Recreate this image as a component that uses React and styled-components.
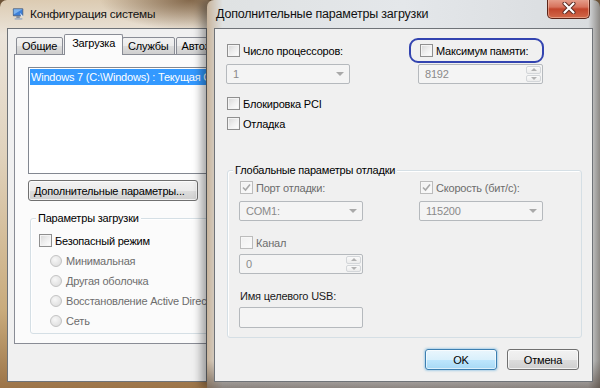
import React from "react";
import styled, { createGlobalStyle, css } from "styled-components";

const GlobalStyle = createGlobalStyle`
  html, body { margin: 0; padding: 0; }
  body {
    font-family: "Liberation Sans", Arial, sans-serif;
    font-size: 11px;
    letter-spacing: -0.2px;
    color: #000;
  }
  * { box-sizing: border-box; }
`;

const Desktop = styled.div`
  position: relative;
  width: 600px;
  height: 388px;
  overflow: hidden;
  background: #6e5438;
`;

// windows on the desktop
const Window = styled.div`
  position: absolute;
  top: 0;
  left: ${(p) => p.$left}px;
  width: ${(p) => p.$width}px;
  height: 388px;
  z-index: ${(p) => (p.$front ? 2 : 1)};
  display: flex;
  flex-direction: column;
  padding: 0 7px 6px 7px;
  border-radius: 7px 7px 0 0;
  overflow: hidden;
  ${(p) =>
    p.$front
      ? css`
          overflow: visible;
          background:
            linear-gradient(to bottom, rgba(255,255,255,0) 93%, rgba(70,55,45,0.55) 100%),
            linear-gradient(to right, #c8b49c 0%, #dfe2e3 4%, #e4e7ea 50%, #d9dcdf 97%, #8d8a86 100%);
          box-shadow: -6px 0 8px rgba(0, 0, 0, 0.35);
        `
      : css`
          background:
            radial-gradient(ellipse 90px 30px at 190px 0px, rgba(110,80,50,0.8), rgba(110,80,50,0) 100%),
            linear-gradient(to bottom, #dccbb2 0%, #ebe4da 9%, #e0d2bc 40%, #c9ab7c 80%, #9c7448 100%);
        `}
`;

const TitleBar = styled.div`
  height: 28px;
  flex: none;
  display: flex;
  align-items: center;
  gap: 5px;
  padding-left: ${(p) => (p.$icon ? 5 : 2)}px;
  font-size: ${(p) => (p.$icon ? 11.8 : 12.5)}px;
  color: #111;
`;

const Client = styled.div`
  flex: 1;
  background: #f0f0f0;
  border: 1px solid #6f7378;
  position: relative;
  overflow: hidden;
`;

const CloseButton = styled.div`
  position: absolute;
  right: 10px;
  top: -2px;
  width: 43px;
  height: 21px;
  border: 1px solid #5a2418;
  border-top: none;
  border-radius: 0 0 5px 5px;
  background: linear-gradient(to bottom, #e9a896 0%, #d7735d 45%, #c2452c 55%, #d1694a 100%);
  box-shadow: inset 0 0 0 1px rgba(255, 220, 200, 0.45);
  display: flex;
  align-items: center;
  justify-content: center;
`;

/* ---------- common controls ---------- */

const CheckRow = styled.label`
  display: flex;
  align-items: center;
  gap: 3px;
  height: 13px;
  margin-left: ${(p) => p.$indent || 0}px;
  color: ${(p) => (p.$disabled ? "#6d6d6d" : "#000")};
  white-space: nowrap;
`;

const Box = styled.span`
  width: 13px;
  height: 13px;
  flex: none;
  display: flex;
  align-items: center;
  justify-content: center;
  border: 1px solid ${(p) => (p.$disabled ? "#bcbcbc" : "#8f8f8f")};
  background: ${(p) =>
    p.$disabled
      ? "linear-gradient(135deg, #f0f0f0, #fbfbfb)"
      : "linear-gradient(135deg, #d6d6d6 0%, #eeeeee 50%, #ffffff 100%)"};
  box-shadow: inset 0 0 0 1px ${(p) => (p.$disabled ? "#f7f7f7" : "#f4f4f4")};
`;

const Radio = styled.span`
  width: 12px;
  height: 12px;
  flex: none;
  border-radius: 50%;
  border: 1px solid #c3c3c3;
  background: radial-gradient(circle at 40% 35%, #f7f7f7 0%, #e2e2e2 70%, #d6d6d6 100%);
`;

function Checkbox({ label, checked, disabled, indent }) {
  return (
    <CheckRow $disabled={disabled} $indent={indent}>
      <Box $disabled={disabled}>
        {checked && (
          <svg width="9" height="9" viewBox="0 0 9 9">
            <path d="M1 4.5 L3.5 7 L8 1.5" fill="none" stroke="#a8a8a8" strokeWidth="1.6" />
          </svg>
        )}
      </Box>
      {label}
    </CheckRow>
  );
}

const Field = styled.div`
  width: ${(p) => p.$w || 124}px;
  height: ${(p) => p.$h || 20}px;
  border: 1px solid #b5b9bd;
  border-radius: 2px;
  background: #f4f4f4;
  color: #8a8a8a;
  display: flex;
  align-items: center;
  padding-left: 6px;
  position: relative;
`;

const Arrow = styled.span`
  position: absolute;
  right: 5px;
  top: 7px;
  width: 0;
  height: 0;
  border-left: 4px solid transparent;
  border-right: 4px solid transparent;
  border-top: 4px solid #a9a9a9;
`;

const SpinBox = styled.div`
  position: absolute;
  right: 1px;
  top: 1px;
  bottom: 1px;
  width: 15px;
  display: flex;
  flex-direction: column;
  gap: 1px;
`;

const SpinHalf = styled.span`
  flex: 1;
  border: 1px solid #d3d6d9;
  border-radius: 2px;
  background: linear-gradient(to bottom, #fafafa, #ececec);
  display: flex;
  align-items: center;
  justify-content: center;
  &::after {
    content: "";
    border-left: 3px solid transparent;
    border-right: 3px solid transparent;
    ${(p) => (p.$up ? "border-bottom: 3px solid #b2b2b2;" : "border-top: 3px solid #b2b2b2;")}
  }
`;

function Combo({ value, w }) {
  return (
    <Field $w={w}>
      {value}
      <Arrow />
    </Field>
  );
}

function Spin({ value, w }) {
  return (
    <Field $w={w}>
      {value}
      <SpinBox>
        <SpinHalf $up />
        <SpinHalf />
      </SpinBox>
    </Field>
  );
}

const Group = styled.div`
  position: relative;
  border: 1px solid #d5dfe5;
  border-radius: 3px;
  margin-left: ${(p) => p.$left}px;
  width: ${(p) => p.$width}px;
  height: ${(p) => p.$height}px;
  padding: ${(p) => p.$pad};
  box-shadow: inset 1px 1px 0 #fff;
`;

const Caption = styled.span`
  position: absolute;
  top: -9px;
  left: 5px;
  padding: 0 2px;
  background: ${(p) => p.$bg};
  line-height: 16px;
  white-space: nowrap;
`;

const Button = styled.div`
  width: ${(p) => p.$w}px;
  height: 21px;
  border-radius: 3px;
  display: flex;
  align-items: center;
  justify-content: ${(p) => (p.$left ? "flex-start" : "center")};
  padding-left: ${(p) => (p.$left ? 5 : 0)}px;
  white-space: nowrap;
  ${(p) =>
    p.$focus
      ? css`
          border: 1px solid #3c7fb1;
          background: linear-gradient(to bottom, #eaf6fd 0%, #d9f0fc 50%, #bee6fd 51%, #a7d9f5 100%);
          box-shadow: 0 0 2px 1px rgba(90, 170, 220, 0.45), inset 0 0 0 1px rgba(255,255,255,0.6);
        `
      : css`
          border: 1px solid #707070;
          background: linear-gradient(to bottom, #f2f2f2 0%, #ebebeb 50%, #dddddd 51%, #cfcfcf 100%);
          box-shadow: inset 0 0 0 1px rgba(255,255,255,0.7);
        `}
`;

/* ---------- back window ---------- */

const TabStrip = styled.div`
  display: flex;
  align-items: flex-end;
  height: 26px;
  padding-left: 8px;
`;

const Tab = styled.div`
  height: ${(p) => (p.$active ? 21 : 18)}px;
  padding: ${(p) => (p.$active ? "2px 7px 0" : "0 5px")};
  margin: ${(p) => (p.$active ? "0 -1px 0 0" : "0 1px 0 0")};
  border: 1px solid #898c95;
  border-bottom: ${(p) => (p.$active ? "none" : "1px solid #898c95")};
  border-radius: 2px 2px 0 0;
  background: ${(p) =>
    p.$active ? "#fbfbfb" : "linear-gradient(to bottom, #f2f2f2 0%, #ebebeb 50%, #dddddd 51%, #cfcfcf 100%)"};
  display: flex;
  align-items: ${(p) => (p.$active ? "flex-start" : "center")};
  position: relative;
  z-index: ${(p) => (p.$active ? 2 : 1)};
  white-space: nowrap;
  flex: none;
`;

const TabPage = styled.div`
  margin: -1px 0 0 6px;
  width: 320px;
  height: 290px;
  border: 1px solid #898c95;
  background: #fbfbfb;
  padding: 12px 0 0 13px;
  display: flex;
  flex-direction: column;
`;

const ListBox = styled.div`
  width: 280px;
  height: 107px;
  border: 1px solid #828790;
  background: #fff;
  padding: 1px;
`;

const ListItem = styled.div`
  background: #3399ff;
  color: #fff;
  height: 16px;
  line-height: 16px;
  padding-left: 1px;
  white-space: nowrap;
`;

const BootOptions = styled.div`
  display: flex;
  flex-direction: column;
  gap: 7px;
`;

const RadioRow = styled.div`
  display: flex;
  align-items: center;
  gap: 4px;
  height: 13px;
  margin-left: 11px;
  color: #6d6d6d;
  white-space: nowrap;
`;

/* ---------- front dialog ---------- */

const DialogBody = styled.div`
  padding: 15px 0 0 11px;
  display: flex;
  flex-direction: column;
`;

const TwoCol = styled.div`
  display: grid;
  grid-template-columns: ${(p) => p.$col}px 130px;
  row-gap: ${(p) => p.$gap}px;
  align-items: center;
`;

const Stack = styled.div`
  display: flex;
  flex-direction: column;
  gap: ${(p) => p.$gap}px;
  margin-top: ${(p) => p.$top}px;
`;

const Label = styled.div`
  margin: ${(p) => p.$m};
  color: ${(p) => p.$color || "#000"};
  line-height: 14px;
  white-space: nowrap;
`;

const Highlight = styled.div`
  position: absolute;
  left: 194px;
  top: 9px;
  width: 135px;
  height: 25px;
  border: 2px solid #3344b0;
  border-radius: 9px;
  pointer-events: none;
`;

const ButtonRow = styled.div`
  display: flex;
  gap: 10px;
  margin: 11px 0 0 199px;
`;

function AppIcon() {
  return (
    <svg width="13" height="14" viewBox="0 0 15 15">
      <rect x="1" y="1" width="12" height="9" rx="1" fill="#5b6c86" />
      <rect x="2" y="2" width="10" height="7" fill="#3d7fd8" />
      <path d="M2 2 L12 2 L2 8 Z" fill="#8fc0f3" opacity="0.8" />
      <rect x="5" y="10" width="4" height="2" fill="#7c8798" />
      <rect x="3" y="12" width="9" height="2" rx="0.5" fill="#a9b3c1" />
      <path d="M9 6 L13 10 L11 11 Z" fill="#e9eef5" />
    </svg>
  );
}

export default function App() {
  return (
    <Desktop>
      <GlobalStyle />

      <Window $left={0} $width={214}>
        <TitleBar $icon>
          <AppIcon />
          Конфигурация системы
        </TitleBar>
        <Client>
          <TabStrip>
            <Tab>Общие</Tab>
            <Tab $active>Загрузка</Tab>
            <Tab>Службы</Tab>
            <Tab>Автозагрузка</Tab>
          </TabStrip>
          <TabPage>
            <ListBox>
              <ListItem>Windows 7 (C:\Windows) : Текущая ОС</ListItem>
            </ListBox>
            <Stack $gap={0} $top={6}>
              <Button $w={170} $left>
                Дополнительные параметры...
              </Button>
            </Stack>
            <Stack $gap={0} $top={17}>
              <Group $left={2} $width={300} $height={116} $pad="15px 0 0 8px">
                <Caption $bg="#fbfbfb">Параметры загрузки</Caption>
                <BootOptions>
                  <Checkbox label="Безопасный режим" />
                  <RadioRow><Radio />Минимальная</RadioRow>
                  <RadioRow><Radio />Другая оболочка</RadioRow>
                  <RadioRow><Radio />Восстановление Active Directory</RadioRow>
                  <RadioRow><Radio />Сеть</RadioRow>
                </BootOptions>
              </Group>
            </Stack>
          </TabPage>
        </Client>
      </Window>

      <Window $left={207} $width={393} $front>
        <TitleBar>Дополнительные параметры загрузки</TitleBar>
        <CloseButton>
          <svg width="14" height="12" viewBox="0 0 14 12">
            <path d="M2.5 1.5 L11.5 10.5 M11.5 1.5 L2.5 10.5" stroke="#5a2a22" strokeWidth="4" strokeLinecap="round" />
            <path d="M2.5 1.5 L11.5 10.5 M11.5 1.5 L2.5 10.5" stroke="#ffffff" strokeWidth="2.2" strokeLinecap="round" />
          </svg>
        </CloseButton>
        <Client>
          <DialogBody>
            <TwoCol $col={192} $gap={7}>
              <Checkbox label="Число процессоров:" indent={1} />
              <Checkbox label="Максимум памяти:" indent={2} />
              <Combo value="1" />
              <Spin value="8192" w={125} />
            </TwoCol>
            <Stack $gap={7} $top={13}>
              <Checkbox label="Блокировка PCI" indent={1} />
              <Checkbox label="Отладка" indent={1} />
            </Stack>
            <Stack $gap={0} $top={40}>
              <Group $left={1} $width={355} $height={168} $pad="10px 0 0 11px">
                <Caption $bg="#f0f0f0">Глобальные параметры отладки</Caption>
                <TwoCol $col={180} $gap={7}>
                  <Checkbox label="Порт отладки:" checked disabled indent={1} />
                  <Checkbox label="Скорость (бит/с):" checked disabled indent={1} />
                  <Combo value="COM1:" />
                  <Combo value="115200" />
                </TwoCol>
                <Stack $gap={5} $top={15}>
                  <Checkbox label="Канал" disabled indent={1} />
                  <Spin value="0" />
                </Stack>
                <Label $m="15px 0 0 1px" $color="#1a1a1a">Имя целевого USB:</Label>
                <Stack $gap={0} $top={4}>
                  <Field $h={21} />
                </Stack>
              </Group>
            </Stack>
            <ButtonRow>
              <Button $w={72} $focus>OK</Button>
              <Button $w={72}>Отмена</Button>
            </ButtonRow>
          </DialogBody>
          <Highlight />
        </Client>
      </Window>
    </Desktop>
  );
}
